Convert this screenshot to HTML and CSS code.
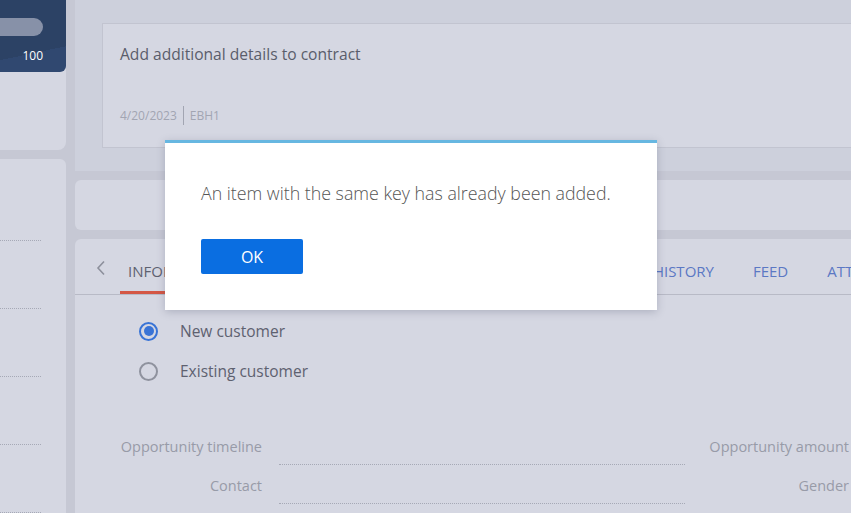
FILE: index.html
```html
<!DOCTYPE html>
<html>
<head>
    <title>Opportunity</title>
    <link rel="stylesheet" href="styles.css">
</head>
<body>
    <div class="page">
        <div class="side">
            <div class="side-top">
                <div class="progress">
                    <div class="progress-bar"></div>
                    <div class="progress-value">100</div>
                </div>
            </div>
            <div class="side-list">
                <div class="side-row"></div>
                <div class="side-row"></div>
                <div class="side-row"></div>
                <div class="side-row"></div>
                <div class="side-row"></div>
            </div>
        </div>
        <div class="main">
            <div class="header">
                <div class="note">
                    <div class="note-title">Add additional details to contract</div>
                    <div class="note-meta">
                        <span>4/20/2023</span>
                        <span class="sep"></span>
                        <span>EBH1</span>
                    </div>
                </div>
            </div>
            <div class="actions"></div>
            <div class="details">
                <div class="tabs">
                    <span class="tab-prev">
                        <svg width="12" height="16" viewBox="0 0 12 16"><path d="M9 1.5 L3 8 L9 14.5" fill="none" stroke="#8d909c" stroke-width="1.6"/></svg>
                    </span>
                    <span class="tab active">INFORMATION</span>
                    <span class="tab">PRODUCTS</span>
                    <span class="tab">CONTACTS</span>
                    <span class="tab">DOCUMENTS</span>
                    <span class="tab">HISTORY</span>
                    <span class="tab">FEED</span>
                    <span class="tab">ATTACHMENTS</span>
                </div>
                <div class="choices">
                    <label class="choice"><span class="radio checked"></span>New customer</label>
                    <label class="choice"><span class="radio"></span>Existing customer</label>
                </div>
                <div class="fields">
                    <div class="field">
                        <span class="field-label">Opportunity timeline</span>
                        <span class="field-value"></span>
                        <span class="field-label">Opportunity amount</span>
                    </div>
                    <div class="field">
                        <span class="field-label">Contact</span>
                        <span class="field-value"></span>
                        <span class="field-label">Gender</span>
                    </div>
                </div>
            </div>
        </div>
    </div>

    <div class="dialog">
        <div class="dialog-text">An item with the same key has already been added.</div>
        <button class="btn-ok">OK</button>
    </div>
</body>
</html>
```

FILE: styles.css
```css
body {
    font-family: "Open Sans", Arial, sans-serif;
    background-color: #c6c8d4;
    margin: 0;
    padding: 0;
    overflow: hidden;
}
.page {
    display: flex;
    gap: 9px;
    height: 513px;
}

/* left column */
.side {
    width: 66px;
    flex-shrink: 0;
    display: flex;
    flex-direction: column;
    gap: 9px;
}
.side-top {
    height: 150px;
    flex-shrink: 0;
    background: #d5d7e2;
    border-radius: 0 0 8px 0;
}
.progress {
    height: 72px;
    background: linear-gradient(168deg, #2c4265 70%, #304870 70%);
    border-radius: 0 0 6px 0;
    padding-top: 18px;
    box-sizing: border-box;
}
.progress-bar {
    width: 43px;
    height: 18px;
    background: #8791a8;
    border-radius: 0 9px 9px 0;
}
.progress-value {
    color: #fff;
    font-size: 12px;
    text-align: right;
    padding-right: 23px;
    margin-top: 11px;
}
.side-list {
    flex: 1;
    min-height: 0;
    overflow: hidden;
    background: #d5d7e2;
    border-radius: 0 6px 0 0;
    padding-top: 81px;
}
.side-row {
    width: 41px;
    height: 67px;
    border-top: 1px dotted #a6a9b6;
}

/* main column */
.main {
    flex: 1;
    display: flex;
    flex-direction: column;
    gap: 9px;
    min-width: 0;
}
.header {
    height: 171px;
    flex-shrink: 0;
    background: #cdd0dc;
    padding: 23px 0 0 27px;
    box-sizing: border-box;
}
.note {
    height: 125px;
    background: #d5d7e2;
    border: 1px solid #c2c4d0;
    border-right: none;
    box-sizing: border-box;
    padding: 19px 17px;
}
.note-title {
    font-size: 15.6px;
    color: #5a5d6b;
}
.note-meta {
    display: flex;
    align-items: center;
    gap: 6px;
    margin-top: 41px;
    font-size: 12px;
    color: #a2a5b2;
}
.sep {
    width: 1px;
    height: 19px;
    background: #a2a5b2;
}
.actions {
    height: 50px;
    flex-shrink: 0;
    background: #d5d7e2;
    border-radius: 6px 0 0 6px;
}
.details {
    flex: 1;
    min-height: 0;
    overflow: hidden;
    background: #d5d7e2;
    border-radius: 6px 0 0 0;
}
.tabs {
    height: 55px;
    border-bottom: 1px solid #b8bac6;
    display: flex;
    align-items: center;
    white-space: nowrap;
    padding-left: 20px;
}
.tab-prev {
    display: flex;
    margin-right: 21px;
    margin-top: 2px;
}
.tab {
    font-size: 15px;
    color: #5b78c4;
    margin-right: 39px;
    height: 55px;
    line-height: 65px;
    box-sizing: border-box;
}
.tab.active {
    color: #5e6170;
    border-bottom: 3px solid #d45745;
    padding: 0 8px;
    margin-left: -8px;
    margin-right: 51px;
}
.choices {
    padding: 16px 0 0 64px;
}
.choice {
    display: flex;
    align-items: center;
    font-size: 15.5px;
    color: #5e6170;
    height: 40px;
}
.radio {
    width: 19px;
    height: 19px;
    border: 2px solid #8f929e;
    border-radius: 50%;
    box-sizing: border-box;
    margin-right: 22px;
    position: relative;
}
.radio.checked {
    border-color: #3873d6;
}
.radio.checked::after {
    content: "";
    position: absolute;
    left: 2.5px;
    top: 2.5px;
    width: 10px;
    height: 10px;
    border-radius: 50%;
    background: #3873d6;
}
.fields {
    display: grid;
    grid-template-columns: 187px 406px 147px;
    column-gap: 17px;
    padding-top: 43px;
    width: 1000px;
}
.field {
    display: contents;
}
.field-label {
    font-size: 14.5px;
    color: #989ba8;
    text-align: right;
    height: 39px;
    line-height: 26px;
    white-space: nowrap;
}
.field-value {
    height: 30px;
    border-bottom: 1px dotted #a6a9b6;
}

/* modal message box */
.dialog {
    position: absolute;
    left: 165px;
    top: 140px;
    width: 492px;
    height: 170px;
    background: #fff;
    border-top: 3px solid #67b7e1;
    box-sizing: border-box;
    box-shadow: 0 2px 8px rgba(60, 64, 90, 0.25);
    padding: 38px 36px 0;
}
.dialog-text {
    font-size: 17.8px;
    font-weight: 300;
    color: #555;
}
.btn-ok {
    margin-top: 34px;
    width: 102px;
    height: 35px;
    background: #0a6ee1;
    color: #fff;
    border: none;
    border-radius: 2px;
    font-family: "Open Sans", Arial, sans-serif;
    font-size: 16px;
}
```
